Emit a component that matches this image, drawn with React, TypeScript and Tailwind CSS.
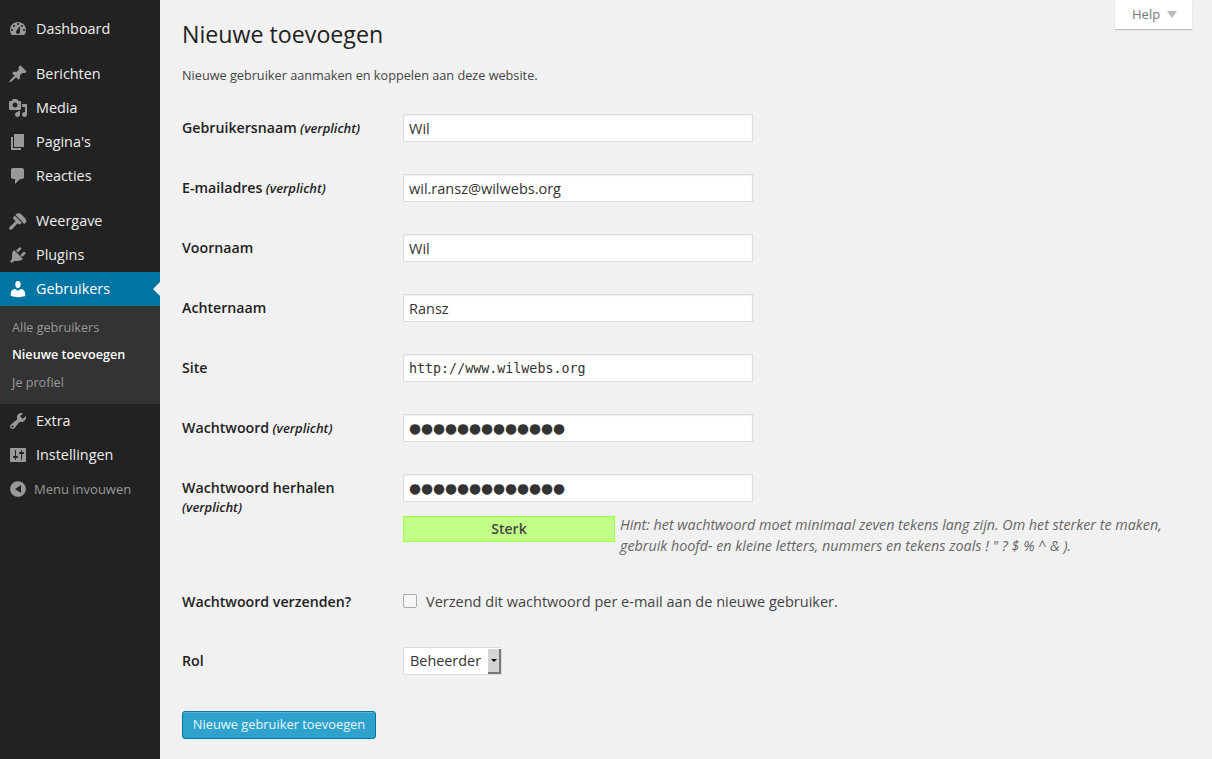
import React from 'react';

// dashicons-style glyphs, all on a 20x20 box
const icons: Record<string, string> = {
  dashboard:
    'M3.76 16h12.48c1.100-1.370 1.760-3.110 1.760-5 0-4.420-3.580-8-8-8s-8 3.580-8 8c0 1.890.66 3.630 1.760 5zM10 4c.55 0 1 .45 1 1s-.45 1-1 1-1-.45-1-1 .45-1 1-1zM6 6c.55 0 1 .45 1 1s-.45 1-1 1-1-.45-1-1 .45-1 1-1zm8 0c.55 0 1 .45 1 1s-.45 1-1 1-1-.45-1-1 .45-1 1-1zm-5.370 5.550L12 7v6c0 1.100-.9 2-2 2s-2-.9-2-2c0-.57.25-1.080.63-1.450zM4 10c.55 0 1 .45 1 1s-.45 1-1 1-1-.45-1-1 .45-1 1-1zm12 0c.55 0 1 .45 1 1s-.45 1-1 1-1-.45-1-1 .45-1 1-1z',
  pin:
    'M10.440 3.020l1.820-1.820 6.360 6.350-1.830 1.820c-1.050-.68-2.480-.57-3.410.36l-.75.75c-.92.93-1.040 2.350-.35 3.410l-1.830 1.820-2.410-2.410-2.800 2.790c-.42.42-3.380 2.710-3.800 2.290s1.860-3.390 2.280-3.810l2.790-2.790L4.100 9.360l1.830-1.820c1.050.69 2.480.57 3.400-.36l.75-.75c.93-.92 1.050-2.350.36-3.410z',
  media:
    'M13 11V4c0-.55-.45-1-1-1h-1.670L9 1H5L3.670 3H2c-.55 0-1 .45-1 1v7c0 .55.45 1 1 1h10c.55 0 1-.45 1-1zM7 4.500c1.380 0 2.500 1.120 2.500 2.500S8.380 9.500 7 9.500 4.500 8.380 4.500 7 5.620 4.500 7 4.500zM14 6h5v10.500c0 1.380-1.120 2.500-2.500 2.500S14 17.880 14 16.500s1.120-2.500 2.500-2.500c.17 0 .34.020.5.050V9h-3V6zm-4 8.050V13h2v3.500c0 1.380-1.120 2.500-2.500 2.500S7 17.880 7 16.500 8.120 14 9.500 14c.17 0 .34.020.5.050z',
  pages: 'M6 15V2h10v13H6zm-1 1h8v2H3V5h2v11z',
  comment: 'M5 2h9c1.100 0 2 .9 2 2v7c0 1.100-.9 2-2 2h-2l-5 5v-5H5c-1.100 0-2-.9-2-2V4c0-1.100.9-2 2-2z',
  brush:
    'M14.500 11L7.500 4l1.500-1.500c.5-.5 2.300-.5 3.500.3 1.200.8 1.500 1.300 2.700 2.500 1.200 1.200 1.700 1.500 2.500 2.700.8 1.200.8 3 .3 3.500L16 13zM6.800 4.700l7 7-1.300 1.300c-.6.6-1.500.6-2.100 0l-.7-.7L4 18.200c-.7.7-1.800.7-2.400.1-.6-.6-.6-1.700.1-2.300l5.900-5.800-2.100-2.200c-.6-.6-.6-1.500 0-2z',
  plug:
    'M13.110 4.360L9.870 7.600 8 5.730l3.240-3.240c.35-.34 1.050-.2 1.560.32.52.51.66 1.210.31 1.550zm-8 1.770l.91-1.120 9.010 9.010-1.190.84c-.71.71-2.630 1.160-3.820 1.160H6.140L4.900 17.260c-.59.59-1.540.59-2.120 0-.59-.58-.59-1.530 0-2.120l1.240-1.240v-3.880c0-1.130.4-3.190 1.090-3.890zm7.260 3.970l3.240-3.240c.34-.35 1.040-.21 1.550.31.52.51.66 1.210.31 1.550l-3.240 3.250z',
  users:
    'M10 9.250c-2.270 0-2.730-3.440-2.730-3.440C7 4.020 7.820 2 9.970 2c2.160 0 2.980 2.020 2.710 3.810 0 0-.41 3.440-2.680 3.440zm0 2.570L12.720 10c2.390 0 4.520 2.330 4.520 4.530v2.490s-3.650 1.130-7.240 1.130c-3.650 0-7.240-1.130-7.240-1.130v-2.490c0-2.250 1.940-4.530 4.430-4.530z',
  tools:
    'M16.680 9.770c-1.340 1.340-3.300 1.670-4.950.99l-5.410 6.520c-.99.99-2.590.99-3.580 0s-.99-2.590 0-3.570l6.520-5.420c-.68-1.650-.35-3.610.99-4.950 1.280-1.280 3.120-1.620 4.720-1.060l-2.890 2.890 2.820 2.820 2.860-2.870c.53 1.580.18 3.400-1.080 4.650zM3.810 16.210c.4.39 1.030.39 1.420 0 .4-.39.4-1.030 0-1.420-.39-.39-1.020-.39-1.420 0-.39.39-.39 1.030 0 1.420z',
  settings:
    'M18 16V4c0-.55-.45-1-1-1H3c-.55 0-1 .45-1 1v12c0 .55.45 1 1 1h14c.55 0 1-.45 1-1zM8 11h1c.55 0 1 .45 1 1s-.45 1-1 1H8v1.500c0 .28-.22.5-.5.5s-.5-.22-.5-.5V13H6c-.55 0-1-.45-1-1s.45-1 1-1h1V5.500c0-.28.22-.5.5-.5s.5.22.5.5V11zm5-2h-1c-.55 0-1-.45-1-1s.45-1 1-1h1V5.500c0-.28.22-.5.5-.5s.5.22.5.5V7h1c.55 0 1 .45 1 1s-.45 1-1 1h-1v5.500c0 .28-.22.5-.5.5s-.5-.22-.5-.5V9z',
  collapse: 'M10 2.160c4.330 0 7.840 3.510 7.840 7.840s-3.510 7.840-7.840 7.840S2.160 14.330 2.160 10 5.670 2.160 10 2.160zM13 14V6l-6 4z',
};

function Icon({ name, active }: { name: string; active?: boolean }) {
  return (
    <svg viewBox="0 0 20 20" className={`w-5 h-5 shrink-0 ${active ? 'fill-white' : 'fill-[#999]'}`}>
      <path fillRule="evenodd" d={icons[name]} />
    </svg>
  );
}

function MenuItem({ icon, label, active }: { icon: string; label: string; active?: boolean }) {
  return (
    <div className={`relative h-[34px] flex items-center pl-[8px] gap-[8px] text-[14.400px] ${active ? 'bg-[#0074a2] text-white' : 'text-[#eee]'}`}>
      <Icon name={icon} active={active} />
      <span className="-mt-[1px]">{label}</span>
      {active && (
        <span className="absolute right-0 top-[10px] border-y-[7px] border-r-[7px] border-y-transparent border-r-[#f1f1f1]" />
      )}
    </div>
  );
}

function Sidebar() {
  return (
    <aside className="w-[160px] shrink-0 bg-[#222] pt-[12px]">
      <MenuItem icon="dashboard" label="Dashboard" />
      <div className="h-[11px]" />
      <MenuItem icon="pin" label="Berichten" />
      <MenuItem icon="media" label="Media" />
      <MenuItem icon="pages" label="Pagina's" />
      <MenuItem icon="comment" label="Reacties" />
      <div className="h-[11px]" />
      <MenuItem icon="brush" label="Weergave" />
      <MenuItem icon="plug" label="Plugins" />
      <MenuItem icon="users" label="Gebruikers" active />
      <div className="bg-[#333] h-[98px] pt-[8px] text-[12.600px] text-[#999]">
        <div className="h-[28px] pl-[12px] flex items-center">Alle gebruikers</div>
        <div className="h-[27px] pl-[12px] flex items-center font-semibold text-white">Nieuwe toevoegen</div>
        <div className="h-[28px] pl-[12px] flex items-center">Je profiel</div>
      </div>
      <MenuItem icon="tools" label="Extra" />
      <MenuItem icon="settings" label="Instellingen" />
      <div className="h-[34px] flex items-center pl-[8px] gap-[6px] text-[13px] text-[#999]">
        <Icon name="collapse" />
        <span className="mt-[1px]">Menu invouwen</span>
      </div>
    </aside>
  );
}

function Row({ label, required, wrap, children, className }: { label: string; required?: boolean; wrap?: boolean; children: React.ReactNode; className?: string }) {
  return (
    <div className={`flex ${className ?? 'h-[60px] pt-[16px]'}`}>
      <div className="w-[221px] shrink-0 pt-[4px] text-[14.200px] leading-[20px] font-semibold text-[#222]">
        {label}
        {required && wrap && <div className="italic text-[13px] leading-[20px] -mt-[1px]">(verplicht)</div>}
        {required && !wrap && <span className="italic text-[13px]"> (verplicht)</span>}
      </div>
      <div>{children}</div>
    </div>
  );
}

const inputClass =
  'block w-[350px] h-[28px] bg-white border border-[#ddd] px-[5px] text-[#333] outline-none shadow-[inset_0_1px_2px_rgba(0,0,0,0.07)]';

function Field({ value, mono }: { value: string; mono?: boolean }) {
  return (
    <input
      readOnly
      value={value}
      className={`${inputClass} ${mono ? "font-['DejaVu_Sans_Mono',monospace] text-[13.330px]" : 'text-[14.500px]'}`}
    />
  );
}

function Bullets() {
  return (
    <div className={`${inputClass} flex items-center font-['DejaVu_Sans',sans-serif] text-[13.750px]`}>
      {'●●●●●●●●●●●●●'}
    </div>
  );
}

export default function App() {
  return (
    <div className="flex h-[759px] overflow-hidden bg-[#f1f1f1] font-['Open_Sans',sans-serif] text-[#444]">
      <Sidebar />
      <main className="relative flex-1 pl-[22px]">
        <div className="absolute right-[20px] top-0 w-[77px] h-[29px] bg-white shadow-[0_1px_1px_rgba(0,0,0,0.2)] text-[13px] text-[#777] flex items-center pl-[17px] gap-[7px]">
          Help
          <span className="border-x-[5px] border-t-[7px] border-x-transparent border-t-[#bbb]" />
        </div>
        <h1 className="pt-[17px] text-[23.200px] leading-[34px] text-[#222]">Nieuwe toevoegen</h1>
        <p className="mt-[14px] mb-[13px] text-[12.700px] leading-[20px]">Nieuwe gebruiker aanmaken en koppelen aan deze website.</p>

        <Row label="Gebruikersnaam" required><Field value="Wil" /></Row>
        <Row label="E-mailadres" required><Field value="wil.ransz@wilwebs.org" /></Row>
        <Row label="Voornaam"><Field value="Wil" /></Row>
        <Row label="Achternaam"><Field value="Ransz" /></Row>
        <Row label="Site"><Field value="http://www.wilwebs.org" mono /></Row>
        <Row label="Wachtwoord" required><Bullets /></Row>
        <Row label="Wachtwoord herhalen" required wrap className="h-[114px] pt-[16px]">
          <Bullets />
          <div className="flex mt-[14px]">
            <div className="w-[212px] h-[26px] shrink-0 bg-[#c1ff88] border border-[#9dff47] flex items-center justify-center pb-[2px] text-[14px] font-semibold text-[#444]">
              Sterk
            </div>
            <p className="w-[548px] ml-[5px] -mt-[2px] text-[14.300px] leading-[21px] italic text-[#666]">
              Hint: het wachtwoord moet minimaal zeven tekens lang zijn. Om het sterker te maken, gebruik hoofd- en kleine letters, nummers en tekens zoals ! " ? $ % ^ &amp; ).
            </p>
          </div>
        </Row>
        <Row label="Wachtwoord verzenden?" className="h-[60px] pt-[16px]">
          <div className="flex items-center gap-[9px] h-[28px] text-[14.530px]">
            <span className="-mt-[2px] w-[14px] h-[14px] rounded-[2px] border border-[#aaa] bg-[#f6f6f6]" />
            Verzend dit wachtwoord per e-mail aan de nieuwe gebruiker.
          </div>
        </Row>
        <Row label="Rol" className="h-[60px] pt-[15px]">
          <div className="flex w-[99px] h-[28px] bg-white border border-[#ddd] text-[14.400px] text-[#333] items-center pl-[6px]">
            <span className="flex-1">Beheerder</span>
            <span className="w-[13px] h-[25px] bg-[#d4d4d4] border-r-2 border-b-2 border-[#777] flex items-center justify-center">
              <span className="border-x-[3px] border-t-[3px] border-x-transparent border-t-black" />
            </span>
          </div>
        </Row>
        <button className="mt-[19px] w-[194px] h-[28px] bg-[#2ea2cc] border border-[#0074a2] rounded-[3px] text-[12.850px] text-[#e8f6fb] shadow-[inset_0_1px_0_rgba(120,200,230,0.5)]">
          Nieuwe gebruiker toevoegen
        </button>
      </main>
    </div>
  );
}
